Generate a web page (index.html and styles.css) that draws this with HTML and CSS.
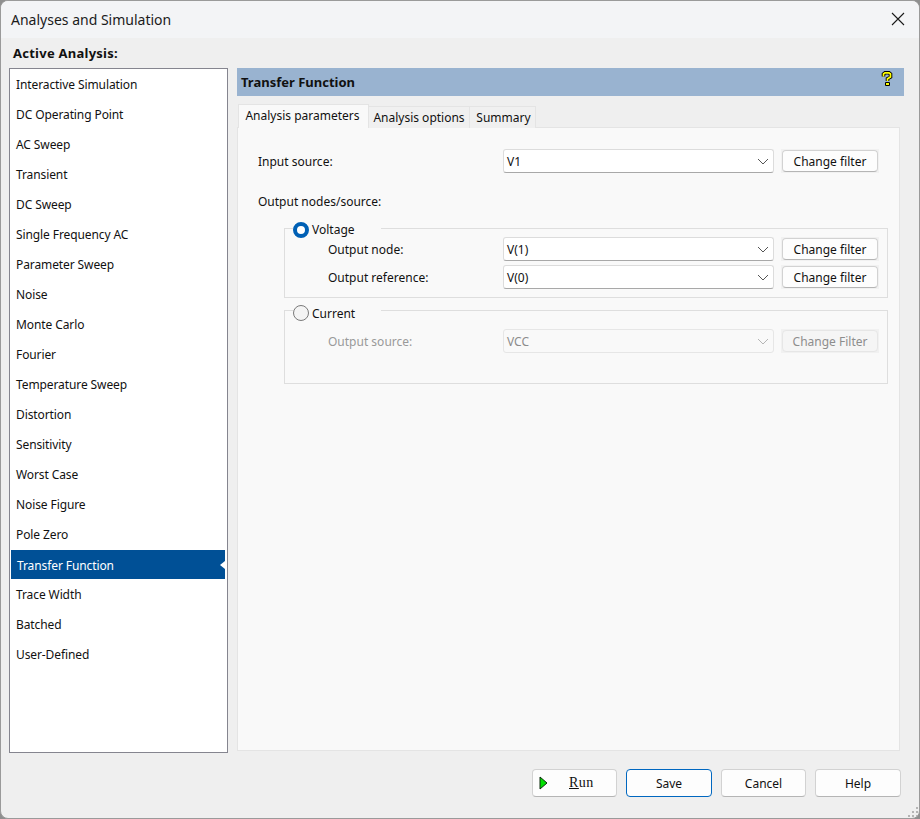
FILE: index.html
```html
<!DOCTYPE html>
<html lang="en">
<head>
<meta charset="utf-8">
<title>Analyses and Simulation</title>
<link rel="stylesheet" href="styles.css">
</head>
<body>
<div class="window">
  <header class="titlebar">
    <span class="title">Analyses and Simulation</span>
    <svg class="close" width="14" height="14" viewBox="0 0 14 14"><path d="M1 1L13 13M13 1L1 13" stroke="#1a1a1a" stroke-width="1.1" fill="none"/></svg>
  </header>
  <main class="body">
    <aside class="side">
      <div class="side-label">Active Analysis:</div>
      <ul class="list">
        <li>Interactive Simulation</li>
        <li>DC Operating Point</li>
        <li>AC Sweep</li>
        <li>Transient</li>
        <li>DC Sweep</li>
        <li>Single Frequency AC</li>
        <li>Parameter Sweep</li>
        <li>Noise</li>
        <li>Monte Carlo</li>
        <li>Fourier</li>
        <li>Temperature Sweep</li>
        <li>Distortion</li>
        <li>Sensitivity</li>
        <li>Worst Case</li>
        <li>Noise Figure</li>
        <li>Pole Zero</li>
        <li class="selected">Transfer Function</li>
        <li>Trace Width</li>
        <li>Batched</li>
        <li>User-Defined</li>
      </ul>
    </aside>
    <section class="panel">
      <div class="panel-head">
        <span class="panel-title">Transfer Function</span>
        <svg class="help-icon" width="12" height="16" viewBox="0 0 12 16"><path d="M2.5 5.5V3L4 1.8H8L9.5 3V6L6.5 7.8V10" fill="none" stroke="#000" stroke-width="3.6"/><path d="M4.5 11.5h4v3h-4z" fill="#ff0" stroke="#000"/><path d="M2.5 5.5V3L4 1.8H8L9.5 3V6L6.5 7.8V10" fill="none" stroke="#ff0" stroke-width="1.7"/></svg>
      </div>
      <div class="tabs">
        <div class="tab active">Analysis parameters</div>
        <div class="tab tab-options">Analysis options</div>
        <div class="tab tab-summary">Summary</div>
      </div>
      <div class="pane">
        <div class="row row-input">
          <span class="lbl lbl-main">Input source:</span>
          <div class="select"><span>V1</span><svg class="chev" width="12" height="7" viewBox="0 0 12 7"><path d="M1 1L6 6L11 1" fill="none" stroke="#555" stroke-width="1"/></svg></div>
          <div class="filter-wrap"><button class="btn filter">Change filter</button></div>
        </div>
        <div class="output-head">Output nodes/source:</div>
        <fieldset class="group group-v">
          <legend class="legend"><span class="radio on"></span><span>Voltage</span></legend>
          <div class="row">
            <span class="lbl lbl-sub">Output node:</span>
            <div class="select select-sub"><span>V(1)</span><svg class="chev" width="12" height="7" viewBox="0 0 12 7"><path d="M1 1L6 6L11 1" fill="none" stroke="#555" stroke-width="1"/></svg></div>
            <div class="filter-wrap"><button class="btn filter">Change filter</button></div>
          </div>
          <div class="row">
            <span class="lbl lbl-sub">Output reference:</span>
            <div class="select select-sub"><span>V(0)</span><svg class="chev" width="12" height="7" viewBox="0 0 12 7"><path d="M1 1L6 6L11 1" fill="none" stroke="#555" stroke-width="1"/></svg></div>
            <div class="filter-wrap"><button class="btn filter">Change filter</button></div>
          </div>
        </fieldset>
        <fieldset class="group group-c">
          <legend class="legend"><span class="radio"></span><span>Current</span></legend>
          <div class="row disabled">
            <span class="lbl lbl-sub">Output source:</span>
            <div class="select select-sub"><span>VCC</span><svg class="chev" width="12" height="7" viewBox="0 0 12 7"><path d="M1 1L6 6L11 1" fill="none" stroke="#b5b5b5" stroke-width="1"/></svg></div>
            <div class="filter-wrap"><button class="btn filter" disabled>Change Filter</button></div>
          </div>
        </fieldset>
      </div>
    </section>
  </main>
  <footer class="footer">
    <button class="btn action run"><svg class="play" width="9" height="14" viewBox="0 0 9 14"><path d="M1 1L8 7L1 13Z" fill="#00e000" stroke="#0a2a0a" stroke-width="1"/></svg><span class="run-text"><u>R</u>un</span></button>
    <button class="btn action primary">Save</button>
    <button class="btn action narrow">Cancel</button>
    <button class="btn action">Help</button>
  </footer>
  <svg class="grip" width="10" height="10" viewBox="0 0 10 10"><path d="M8 0h2v2H8zM4 4h2v2H4zM8 4h2v2H8zM0 8h2v2H0zM4 8h2v2H4zM8 8h2v2H8z" fill="#b4b4b4"/></svg>
</div>
</body>
</html>
```
FILE: styles.css
```css
* { box-sizing: border-box; }
html, body { margin: 0; padding: 0; height: 100%; background: #8f8f8f; }
body { font-family: "Noto Sans", "Open Sans", sans-serif; font-size: 12px; color: #111; overflow: hidden; }

.window {
  position: relative;
  width: 920px; height: 819px;
  display: flex; flex-direction: column;
  background: #efefef;
  border: 1px solid #9a9a9a;
  border-radius: 8px;
  overflow: hidden;
}
.titlebar {
  height: 37px; flex: none;
  display: flex; align-items: center; justify-content: space-between;
  padding: 0 14px 1px 10px;
  background: #f3f4f6;
}
.title { font-size: 14px; color: #1b1b1b; }
.close { display: block; }

.body { flex: 1; display: flex; min-height: 0; padding: 0 15px 0 8px; gap: 9px; }
.side { width: 219px; flex: none; display: flex; flex-direction: column; }
.side-label { height: 30px; padding: 7px 0 0 4px; font-weight: 700; font-size: 13px; line-height: 16px; letter-spacing: 0.25px; }
.list {
  list-style: none; margin: 0; padding: 1px;
  height: 686px;
  background: #fff;
  border: 1px solid #85858f;
  letter-spacing: -0.1px;
}
.list li { height: 30px; padding: 0 0 0 5px; line-height: 29px; margin-right: 1px; }
.list li.selected { position: relative; background: #005096; color: #fff; height: 29px; line-height: 31px; padding-left: 6px; margin: 0 1px 1px 0; }
.list li.selected::after {
  content: ""; position: absolute; right: 0; top: 11px;
  border: 4px solid transparent; border-left: 0; border-right: 5px solid #fff;
}

.panel { width: 667px; flex: none; display: flex; flex-direction: column; }
.panel-head {
  margin-top: 30px; height: 28px; flex: none;
  display: flex; align-items: center; justify-content: space-between;
  padding: 0 11px 0 4px;
  background: #99b3d0;
}
.panel-title { font-weight: 700; font-size: 13px; }
.help-icon { display: block; margin-top: -6px; }
.tabs { display: flex; height: 23px; margin-top: 8px; padding-left: 1px; flex: none; position: relative; z-index: 1; }
.tab {
  height: 22px; margin-top: 2px; padding-top: 1px; text-align: center; line-height: 19px;
  background: #f0f0f0; border: 1px solid #e4e4e4; border-bottom: 0;
}
.tab.active { width: 131px; height: 24px; margin-top: 0; padding-right: 2px; line-height: 19px; background: #f9f9f9; }
.tab-options { width: 101px; border-left: 0; }
.tab-summary { width: 66px; border-left: 0; padding-left: 2px; }
.pane {
  width: 663px; height: 624px;
  padding: 21px 10px 0 20px;
  background: #f9f9f9;
  border: 1px solid #e4e4e4;
}

.row { display: flex; align-items: center; height: 24px; }
.lbl { flex: none; }
.lbl-main { width: 245px; }
.lbl-sub { width: 175px; }
.select {
  width: 271px; height: 24px; flex: none;
  display: flex; align-items: center; justify-content: space-between;
  padding: 0 3px 0 3px;
  background: #fff;
  border: 1px solid #dcdcdc;
  border-bottom-color: #a8a8a8;
  border-radius: 3px;
}
.chev { display: block; margin-right: 1px; }
.btn {
  font: inherit; color: #111;
  background: #fdfdfd;
  border: 1px solid #d2d2d2;
  border-bottom-color: #b5b5b5;
  border-radius: 4px;
  padding: 0;
}
.filter-wrap { flex: none; margin-left: 7px; padding: 1px; background: #f1f1f1; }
.filter { display: block; width: 96px; height: 22px; }
.output-head { margin-top: 21px; height: 16px; line-height: 16px; }

.group { min-width: 0; border: 1px solid #dedede; width: 604px; margin: 0 0 0 26px; padding: 0 0 0 43px; }
.group-v { height: 80px; margin-top: 8px; }
.group-c { height: 85px; margin-top: 1px; }
.legend { display: flex; align-items: center; gap: 3px; width: 88px; height: 20px; padding: 3px 0 0; margin-left: -35px; }
.group-c .legend { height: 22px; padding-top: 6px; }
.radio { width: 16px; height: 16px; flex: none; border-radius: 50%; border: 1px solid #7a7a7a; background: #f4f4f4; }
.radio.on { border: 4.5px solid #0060b5; background: #fff; }
.group-v .row { margin-bottom: 4px; }
.group-v .row:first-of-type { margin-top: -1px; }
.group-c .row { margin-top: 8px; }
.disabled .lbl { color: #9a9a9a; }
.disabled .select { color: #8c8c8c; background: #f9f9f9; border-color: #e6e6e6; }
.btn[disabled] { color: #8d8d8d; background: #f5f5f5; border-color: #e6e6e6; }

.footer {
  flex: none; height: 65px;
  display: flex; justify-content: flex-end; gap: 9px;
  padding: 16px 18px 0 0;
}
.action { width: 86px; height: 28px; }
.narrow { width: 85px; }
.run { display: flex; align-items: center; width: 85px; padding-left: 6px; }
.play { display: block; flex: none; }
.run-text { font-family: "Liberation Serif", "DejaVu Serif", serif; font-size: 14px; margin-left: 21px; letter-spacing: 0.5px; }
.primary { border: 1px solid #0067c0; }
.grip { position: absolute; right: 1px; bottom: 1px; }
```
